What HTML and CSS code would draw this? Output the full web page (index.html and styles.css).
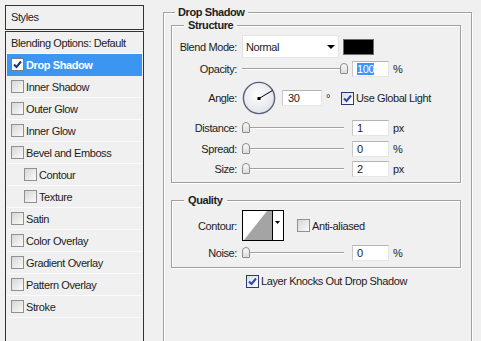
FILE: index.html
```html
<!doctype html>
<html>
<head>
  <meta charset="utf-8">
  <title>Layer Style - Drop Shadow</title>
  <link rel="stylesheet" href="styles.css">
</head>
<body>
  <!-- Styles list -->
  <div class="styles-panel">
    <div class="styles-head">Styles</div>
    <ul class="style-list">
      <li class="style-item">Blending Options: Default</li>
      <li class="style-item selected">
        <span class="check checked"><svg width="11" height="11" viewBox="0 0 11 11"><path d="M2 5.5 L4.5 8 L9 2.5" fill="none" stroke="#22307a" stroke-width="2"/></svg></span>Drop Shadow
      </li>
      <li class="style-item"><span class="check"></span>Inner Shadow</li>
      <li class="style-item"><span class="check"></span>Outer Glow</li>
      <li class="style-item"><span class="check"></span>Inner Glow</li>
      <li class="style-item"><span class="check"></span>Bevel and Emboss</li>
      <li class="style-item sub"><span class="check"></span>Contour</li>
      <li class="style-item sub"><span class="check"></span>Texture</li>
      <li class="style-item"><span class="check"></span>Satin</li>
      <li class="style-item"><span class="check"></span>Color Overlay</li>
      <li class="style-item"><span class="check"></span>Gradient Overlay</li>
      <li class="style-item"><span class="check"></span>Pattern Overlay</li>
      <li class="style-item"><span class="check"></span>Stroke</li>
    </ul>
  </div>

  <!-- Effect settings -->
  <fieldset class="group effect">
    <legend>Drop Shadow</legend>

    <fieldset class="group structure">
      <legend>Structure</legend>
      <div class="row blend-row">
        <span class="field-label">Blend Mode:</span>
        <div class="select">Normal<span class="arrow"></span></div>
        <div class="swatch"></div>
      </div>
      <div class="row opacity-row">
        <span class="field-label">Opacity:</span>
        <div class="slider"><span class="thumb" style="left: 98px"></span></div>
        <div class="num"><span class="picked">100</span></div>
        <span class="unit">%</span>
      </div>
      <div class="row angle-row">
        <span class="field-label">Angle:</span>
        <svg class="dial" width="34" height="34" viewBox="0 0 34 34">
          <defs>
            <radialGradient id="dialFill" cx="45%" cy="40%" r="60%">
              <stop offset="0" stop-color="#ffffff"/>
              <stop offset="1" stop-color="#e2e3ea"/>
            </radialGradient>
          </defs>
          <circle cx="17" cy="17" r="15.6" fill="url(#dialFill)" stroke="#56607a" stroke-width="1.4"/>
          <line x1="17" y1="17.5" x2="30.5" y2="9.5" stroke="#000" stroke-width="1"/>
          <rect x="15.5" y="16" width="3" height="3" fill="#000"/>
        </svg>
        <div class="num angle-num">30</div>
        <span class="unit">°</span>
        <span class="check checked dark"><svg width="11" height="11" viewBox="0 0 11 11"><path d="M2 5.5 L4.5 8 L9 2.5" fill="none" stroke="#2b4aa8" stroke-width="2"/></svg></span>
        <span class="check-text">Use Global Light</span>
      </div>
      <div class="row distance-row">
        <span class="field-label">Distance:</span>
        <div class="slider"><span class="thumb" style="left: 0px"></span></div>
        <div class="num">1</div>
        <span class="unit">px</span>
      </div>
      <div class="row spread-row">
        <span class="field-label">Spread:</span>
        <div class="slider"><span class="thumb" style="left: 0px"></span></div>
        <div class="num">0</div>
        <span class="unit">%</span>
      </div>
      <div class="row size-row">
        <span class="field-label">Size:</span>
        <div class="slider"><span class="thumb" style="left: 0px"></span></div>
        <div class="num">2</div>
        <span class="unit">px</span>
      </div>
    </fieldset>

    <fieldset class="group quality">
      <legend>Quality</legend>
      <div class="row contour-row">
        <span class="field-label">Contour:</span>
        <svg class="contour" width="42" height="31" viewBox="0 0 42 31">
          <rect x="0.5" y="0.5" width="41" height="30" fill="#fff" stroke="#000"/>
          <path d="M2 30 L25 1 L30 1 L30 30 Z" fill="#a4a4a4"/>
          <line x1="30.5" y1="0" x2="30.5" y2="31" stroke="#000"/>
          <path d="M33 11 h5 l-2.5 3 z" fill="#000"/>
        </svg>
        <span class="check"></span>
        <span class="check-text">Anti-aliased</span>
      </div>
      <div class="row noise-row">
        <span class="field-label">Noise:</span>
        <div class="slider"><span class="thumb" style="left: 0px"></span></div>
        <div class="num">0</div>
        <span class="unit">%</span>
      </div>
    </fieldset>

    <div class="row knockout-row">
      <span class="check checked dark"><svg width="11" height="11" viewBox="0 0 11 11"><path d="M2 5.5 L4.5 8 L9 2.5" fill="none" stroke="#2b4aa8" stroke-width="2"/></svg></span>
      <span class="check-text">Layer Knocks Out Drop Shadow</span>
    </div>
  </fieldset>
</body>
</html>
```

FILE: styles.css
```css
body {
  margin: 0;
  height: 341px;
  overflow: hidden;
  background-color: #f0f0f0;
  color: #1c1c1c;
  font-family: "Liberation Sans", Arial, sans-serif;
  font-size: 11px;
  letter-spacing: -0.4px;
  display: flex;
  align-items: flex-start;
}

/* Styles list */
.styles-panel {
  margin: 5px 0 0 5px;
  width: 139px;
}
.styles-head {
  height: 25px;
  box-sizing: border-box;
  border: 1px solid #333333;
  padding-left: 5px;
  line-height: 23px;
}
.style-list {
  list-style: none;
  margin: 1px 0 0;
  padding: 0 1px;
  height: 310px;
  border: 1px solid #333333;
  border-bottom: 0;
}
.style-item {
  display: flex;
  align-items: center;
  gap: 2px;
  height: 21px;
  padding-left: 4px;
  border-bottom: 1px solid #fbfbfb;
}
.style-item.sub {
  padding-left: 17px;
}
.style-item.selected {
  background-color: #3d95f2;
  border-bottom-color: #3d95f2;
  color: #ffffff;
  font-weight: bold;
}

/* Checkboxes */
.check {
  flex: none;
  width: 13px;
  height: 13px;
  box-sizing: border-box;
  border: 1px solid #909090;
  background: linear-gradient(135deg, #d6d6d6, #fbfbfb);
}
.check svg {
  display: block;
}
.check.checked {
  background: #ffffff;
  border-color: #7c7c88;
}
.check.dark {
  border-color: #2a3a6e;
  background: linear-gradient(135deg, #dcdcea, #ffffff);
}
.check-text {
  margin-left: 2px;
}

/* Group boxes */
.group {
  margin: 0;
  padding: 0;
  border: 1px solid #a0a0a0;
  box-shadow: 1px 1px 0 #ffffff, inset 1px 1px 0 #ffffff;
}
.group legend {
  margin-left: 4px;
  padding: 0 3px;
  line-height: 12px;
  font-weight: bold;
  background-color: #f0f0f0;
}
.effect {
  margin: 6px 0 0 19px;
  width: 309px;
  height: 335px;
  box-sizing: border-box;
  padding: 0 10px 0 7px;
  border-bottom: 0;
}
.structure {
  margin-top: 1px;
  padding-bottom: 5px;
}
.quality {
  margin-top: 11px;
  padding-bottom: 6px;
}
.structure legend,
.quality legend {
  margin-left: 12px;
  padding: 0 4px;
}

/* Rows */
.row {
  display: flex;
  align-items: center;
  height: 16px;
  margin-top: 4px;
}
.field-label {
  flex: none;
  width: 65px;
  margin-right: 5px;
  text-align: right;
}
.blend-row {
  height: 23px;
}
.opacity-row {
  margin-top: 3px;
}
.angle-row {
  height: 34px;
}
.distance-row,
.spread-row {
  margin-top: 5px;
}
.contour-row {
  height: 31px;
}
.knockout-row {
  margin-top: 6px;
  height: 14px;
  padding-left: 75px;
}

/* Controls */
.select {
  display: flex;
  align-items: center;
  width: 97px;
  height: 23px;
  box-sizing: border-box;
  padding-left: 3px;
  background-color: #ffffff;
  border: 1px solid #e4e4e4;
}
.arrow {
  margin-left: auto;
  margin-right: 3px;
  border-left: 4px solid transparent;
  border-right: 4px solid transparent;
  border-top: 4px solid #000000;
}
.swatch {
  width: 31px;
  height: 16px;
  box-sizing: border-box;
  margin-left: 4px;
  background-color: #000000;
  border: 1px solid #6c6c6c;
}
.slider {
  position: relative;
  flex: none;
  width: 106px;
  height: 16px;
  margin-right: 4px;
}
.slider::before {
  content: "";
  position: absolute;
  left: 0;
  top: 7px;
  width: 102px;
  border-top: 1px solid #a2a2a2;
  border-bottom: 1px solid #ffffff;
}
.thumb {
  position: absolute;
  top: 2px;
  width: 8px;
  height: 11px;
  box-sizing: border-box;
  border: 1px solid #8c8c8c;
  border-radius: 4px 4px 1px 1px;
  background: linear-gradient(#fafafa, #dcdcdc);
}
.num {
  flex: none;
  width: 37px;
  height: 16px;
  box-sizing: border-box;
  padding-left: 4px;
  line-height: 14px;
  background-color: #ffffff;
  border: 1px solid;
  border-color: #b4b4b4 #e6e6e6 #e6e6e6 #c8c8c8;
}
.picked {
  background-color: #3399ff;
  color: #ffffff;
}
.angle-num {
  width: 40px;
  padding-left: 5px;
}
.unit {
  margin-left: 4px;
}
.dial {
  flex: none;
  margin-right: 6px;
}
.angle-row .check {
  margin-left: 11px;
}
.contour {
  flex: none;
  margin-right: 13px;
}
```
